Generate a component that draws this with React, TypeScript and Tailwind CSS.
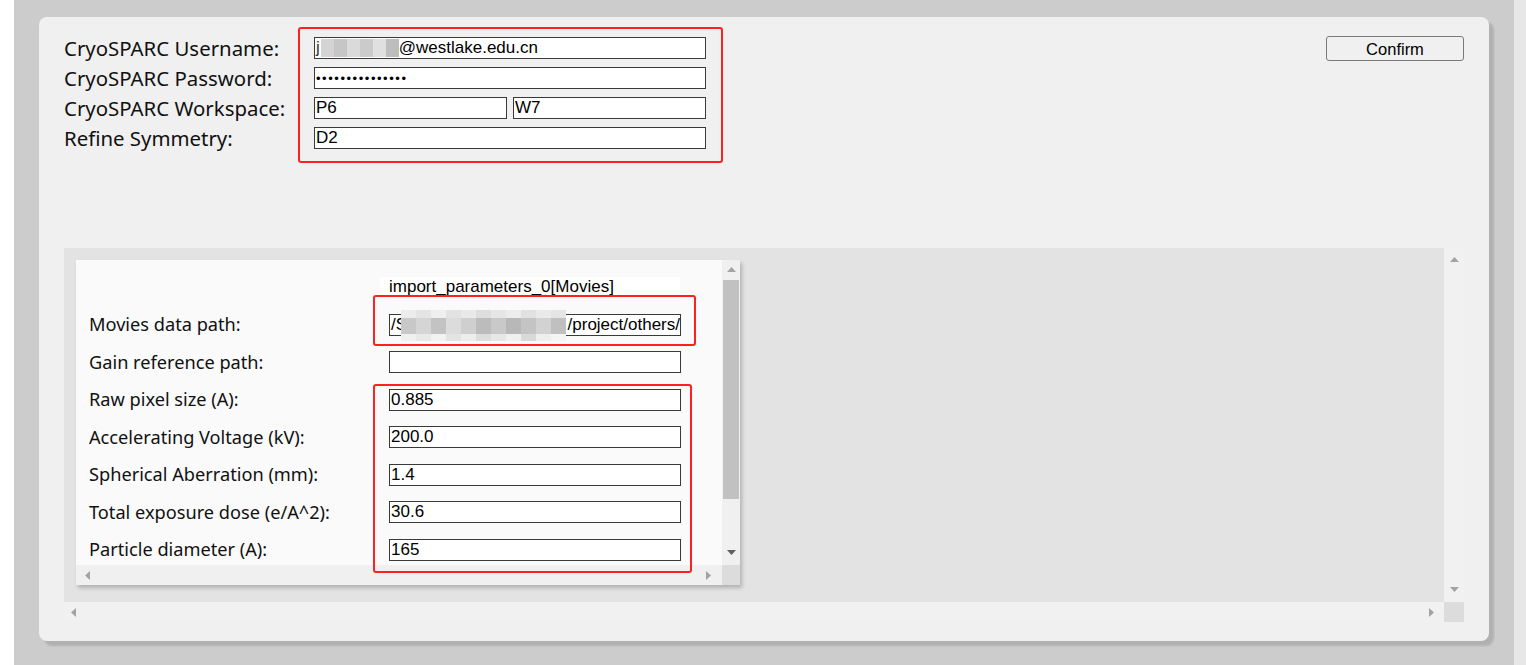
import React from 'react';

const labelFont = "font-['Noto_Sans',sans-serif]";
const inputFont = "font-['Liberation_Sans',Arial,sans-serif]";

function UpArrow({ color = '#a3a3a3' }: { color?: string }) {
  return (
    <svg width="9" height="5" viewBox="0 0 9 5">
      <polygon points="0,5 9,5 4.5,0" fill={color} />
    </svg>
  );
}

function DownArrow({ color = '#a3a3a3' }: { color?: string }) {
  return (
    <svg width="9" height="5" viewBox="0 0 9 5">
      <polygon points="0,0 9,0 4.5,5" fill={color} />
    </svg>
  );
}

function LeftArrow({ color = '#a3a3a3' }: { color?: string }) {
  return (
    <svg width="5" height="9" viewBox="0 0 5 9">
      <polygon points="5,0 5,9 0,4.5" fill={color} />
    </svg>
  );
}

function RightArrow({ color = '#a3a3a3' }: { color?: string }) {
  return (
    <svg width="5" height="9" viewBox="0 0 5 9">
      <polygon points="0,0 0,9 5,4.5" fill={color} />
    </svg>
  );
}

// pixelated redaction blocks, like the ones in the screenshot
const userMosaic = ['bg-[#d4d4d4]', 'bg-[#c6c6c6]', 'bg-[#dadada]', 'bg-[#cbcbcb]', 'bg-[#e0e0e0]', 'bg-[#bdbdbd]'];
const pathMosaicTop = ['bg-[#ececec]', 'bg-[#e4e4e4]', 'bg-[#efefef]', 'bg-[#e2e2e2]', 'bg-[#e9e9e9]', 'bg-[#dedede]', 'bg-[#e6e6e6]', 'bg-[#ececec]', 'bg-[#e1e1e1]', 'bg-[#eaeaea]', 'bg-[#e5e5e5]'];
const pathMosaicMid = ['bg-[#c8c8c8]', 'bg-[#d5d5d5]', 'bg-[#c3c3c3]', 'bg-[#dcdcdc]', 'bg-[#cfcfcf]', 'bg-[#bcbcbc]', 'bg-[#c9c9c9]', 'bg-[#b8b8b8]', 'bg-[#c4c4c4]', 'bg-[#d2d2d2]', 'bg-[#c0c0c0]'];
const pathMosaicBot = ['bg-[#efefef]', 'bg-[#e8e8e8]', 'bg-[#f2f2f2]', 'bg-[#e3e3e3]', 'bg-[#ededed]', 'bg-[#dddddd]', 'bg-[#e7e7e7]', 'bg-[#f0f0f0]', 'bg-[#d9d9d9]', 'bg-[#eeeeee]', 'bg-[#f4f4f4]'];

function Box({ children, className = '' }: { children?: React.ReactNode; className?: string }) {
  return (
    <div
      className={`h-[22px] border border-[#3a3a3a] bg-white pl-[1px] text-[17px] leading-[20px] text-black whitespace-nowrap overflow-hidden ${inputFont} ${className}`}
    >
      {children}
    </div>
  );
}

const params: { label: string; value: string }[] = [
  { label: 'Gain reference path:', value: '' },
  { label: 'Raw pixel size (A):', value: '0.885' },
  { label: 'Accelerating Voltage (kV):', value: '200.0' },
  { label: 'Spherical Aberration (mm):', value: '1.4' },
  { label: 'Total exposure dose (e/A^2):', value: '30.6' },
  { label: 'Particle diameter (A):', value: '165' },
];

export default function App() {
  return (
    <div className="relative w-[1526px] h-[665px] flex overflow-hidden">
      <div className="w-[14px] bg-white" />
      <div className="flex-1 bg-[#cccccc] pl-[25px] pt-[17px]">
        <div className="w-[1450px] h-[624px] rounded-[8px] bg-[#f0f0f0] shadow-[5px_5px_2px_rgba(0,0,0,0.13)] pl-[25px] pr-[25px] pt-[20px]">
          {/* credentials */}
          <div className="flex justify-between">
            <div className="grid grid-cols-[250px_392px] gap-y-[8px] items-center">
              <div className={`text-[20.4px] leading-[22px] text-[#111] ${labelFont}`}>CryoSPARC Username:</div>
              <Box className="flex items-center">
                <span className="text-[#333] mr-[1px]">j</span>
                <span className="inline-flex h-[18px] blur-[0.6px]">
                  {userMosaic.map((c, i) => (
                    <span key={i} className={`w-[13px] h-full ${c}`} />
                  ))}
                </span>
                <span>@westlake.edu.cn</span>
              </Box>

              <div className={`text-[20.4px] leading-[22px] text-[#111] ${labelFont}`}>CryoSPARC Password:</div>
              <Box>
                <span className="text-[13px] tracking-[1.55px] leading-[20px]">•••••••••••••••</span>
              </Box>

              <div className={`text-[20.4px] leading-[22px] text-[#111] ${labelFont}`}>CryoSPARC Workspace:</div>
              <div className="flex gap-[6px]">
                <Box className="w-[193px]">P6</Box>
                <Box className="w-[193px]">W7</Box>
              </div>

              <div className={`text-[20.4px] leading-[22px] text-[#111] ${labelFont}`}>Refine Symmetry:</div>
              <Box>D2</Box>
            </div>

            <button
              className={`-mt-px w-[138px] h-[25px] border border-[#7a7a7a] rounded-[3px] bg-[#f0f0f0] text-[16.5px] leading-[22px] text-black ${inputFont}`}
            >
              Confirm
            </button>
          </div>

          {/* parameters scroll area */}
          <div className="mt-[99px] w-[1400px] h-[374px] grid grid-cols-[1fr_20px] grid-rows-[1fr_20px]">
            <div className="bg-[#e3e3e3] p-[12px] overflow-hidden">
              <div className="w-[664px] h-[325px] bg-[#fafafa] shadow-[2px_3px_4px_rgba(0,0,0,0.22)] grid grid-cols-[1fr_18px] grid-rows-[1fr_20px]">
                <div className="overflow-hidden pl-[13px] pt-[17px]">
                  <div
                    className={`ml-[291px] w-[300px] h-[18px] bg-white pl-[9px] overflow-hidden text-[17px] leading-[20px] text-black whitespace-nowrap ${inputFont}`}
                  >
                    import_parameters_0[Movies]
                  </div>

                  <div className="mt-[11px] flex flex-col">
                    <div className="h-[37.5px] flex items-center">
                      <div className={`w-[300px] text-[18.2px] text-[#111] ${labelFont}`}>Movies data path:</div>
                      <Box className="relative w-[292px] flex justify-between overflow-visible">
                        <span>/S</span>
                        <span>/project/others/</span>
                        <span className="absolute left-[11px] top-[-5px] flex flex-col blur-[0.5px]">
                          <span className="flex h-[8px]">
                            {pathMosaicTop.map((c, i) => (
                              <span key={i} className={`w-[15px] h-full ${c}`} />
                            ))}
                          </span>
                          <span className="flex h-[16px]">
                            {pathMosaicMid.map((c, i) => (
                              <span key={i} className={`w-[15px] h-full ${c}`} />
                            ))}
                          </span>
                          <span className="flex h-[7px]">
                            {pathMosaicBot.map((c, i) => (
                              <span key={i} className={`w-[15px] h-full ${c}`} />
                            ))}
                          </span>
                        </span>
                      </Box>
                    </div>
                    {params.map((p) => (
                      <div key={p.label} className="h-[37.5px] flex items-center">
                        <div className={`w-[300px] text-[18.2px] text-[#111] ${labelFont}`}>{p.label}</div>
                        <Box className="w-[292px]">{p.value}</Box>
                      </div>
                    ))}
                  </div>
                </div>

                <div className="bg-[#f0f0f0] flex flex-col items-center pt-[7px] pb-[10px]">
                  <UpArrow />
                  <div className="mt-[8px] w-[16px] h-[219px] bg-[#c1c1c1]" />
                  <div className="flex-1" />
                  <DownArrow color="#5f5f5f" />
                </div>

                <div className="bg-[#f0f0f0] flex items-center justify-between pl-[9px] pr-[11px]">
                  <LeftArrow />
                  <RightArrow />
                </div>
                <div className="bg-[#dcdcdc]" />
              </div>
            </div>

            <div className="bg-[#f1f1f1] flex flex-col items-center justify-between pt-[9px] pb-[10px]">
              <UpArrow />
              <DownArrow />
            </div>
            <div className="bg-[#f1f1f1] flex items-center justify-between pl-[7px] pr-[10px]">
              <LeftArrow />
              <RightArrow />
            </div>
            <div className="bg-[#dcdcdc]" />
          </div>
        </div>
      </div>
      <div className="w-[12px] bg-[#e7e7e7]" />

      {/* red annotation boxes */}
      <div className="absolute left-[298px] top-[27px] w-[425px] h-[136px] border-2 border-[#ff2020] rounded-[3px]" />
      <div className="absolute left-[373px] top-[295px] w-[323px] h-[51px] border-2 border-[#ff2020] rounded-[3px]" />
      <div className="absolute left-[373px] top-[384px] w-[319px] h-[189px] border-2 border-[#ff2020] rounded-[3px]" />
    </div>
  );
}
